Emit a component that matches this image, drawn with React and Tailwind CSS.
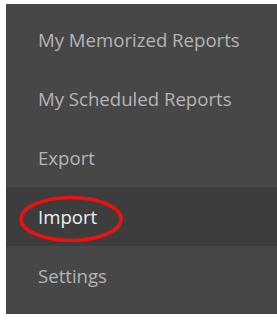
export default function App() {
  const items = ["My Memorized Reports", "My Scheduled Reports", "Export", "Import", "Settings"];
  return (
    <div className="w-[277px] h-[320px] bg-white pt-[4px] pl-[6px] pb-[6px]" style={{ fontFamily: '"Open Sans", sans-serif' }}>
      <div className="h-full bg-[#474747] pt-[6px]">
        {items.map((t) => (
          <div
            key={t}
            className={
              t === "Import"
                ? "relative h-[59px] flex items-center pl-[32px] bg-[#3d3d3d] text-[#f0f0f0] text-[18.6px]"
                : "h-[59px] flex items-center pl-[32px] text-[#b4b4b4] text-[18.6px]"
            }
          >
            {t}
            {t === "Import" && (
              <svg className="absolute left-[13px] top-[8px]" width="104" height="48" viewBox="0 0 104 48">
                <ellipse cx="52" cy="24" rx="50" ry="21.5" fill="none" stroke="#ee1111" strokeWidth="3.5" />
              </svg>
            )}
          </div>
        ))}
      </div>
    </div>
  );
}
